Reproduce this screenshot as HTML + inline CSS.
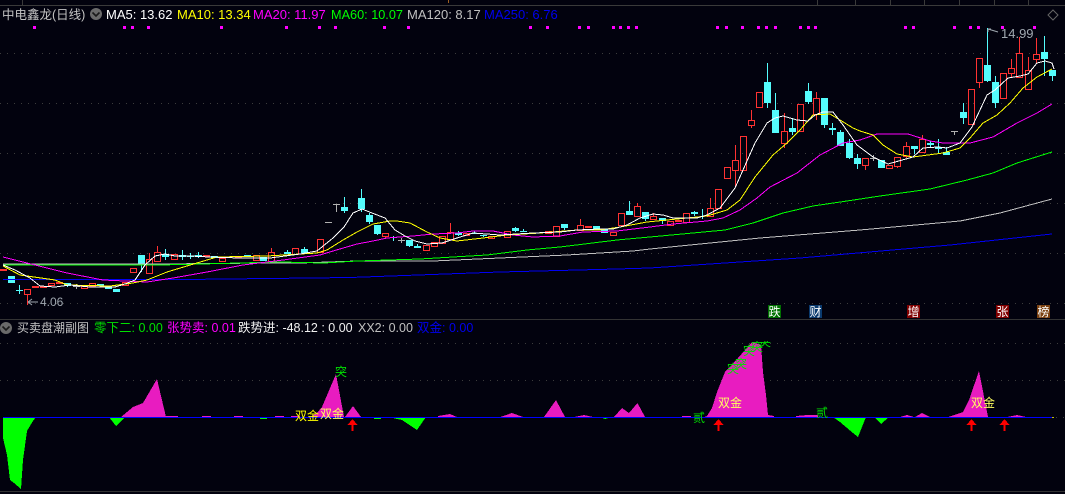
<!DOCTYPE html>
<html lang="zh"><head><meta charset="utf-8"><title>中电鑫龙</title>
<style>
html,body{margin:0;padding:0;background:#02020e;width:1065px;height:494px;overflow:hidden}
svg{display:block}
text{font-family:"Liberation Sans","Noto Sans CJK SC",sans-serif;font-size:13px}
.c{font-size:12px}
.l{font-size:12px;fill:#fff;font-family:"Liberation Sans","WenQuanYi Zen Hei","Noto Sans CJK SC",sans-serif}
.g{font-size:12px;fill:#00e000;font-family:"Liberation Sans","WenQuanYi Zen Hei","Noto Sans CJK SC",sans-serif}
</style></head><body>
<svg width="1065" height="494" viewBox="0 0 1065 494" xmlns="http://www.w3.org/2000/svg">
<defs><clipPath id="tp"><rect x="700" y="341" width="100" height="60"/></clipPath></defs>
<rect width="1065" height="494" fill="#02020e"/>
<!-- top ruler -->
<g shape-rendering="crispEdges" stroke="#3a3a3a" fill="none">
<path d="M0 5.5H1065M22.5 0V5M817.5 0V5M855.5 0V5M890.5 0V5M924.5 0V5M959.5 0V5M994.5 0V5M1028.5 0V5"/>
<path d="M448.5 0V3" stroke="#a06020"/>
<path d="M0 319.5H1065M0 491.5H1065" stroke="#333"/>
</g>
<!-- dotted grid -->
<g shape-rendering="crispEdges" stroke="#3c3c3c" stroke-dasharray="1 6" fill="none">
<path d="M0 53.5H1065M0 103.5H1065M0 153.5H1065M0 203.5H1065M0 253.5H1065M0 303.5H1065M0 343.5H1065M0 380.5H1065"/>
</g>
<path d="M1053 10l5 5-5 5-5-5z" fill="none" stroke="#666"/>
<!-- header -->
<text x="2" y="19" style="font-size:12.5px" fill="#c4c4c4">中电鑫龙(日线)</text>
<circle cx="96" cy="14" r="6" fill="#6a6a6a"/><path d="M92.5 12.5l3.5 3.5 3.5-3.5" fill="none" stroke="#1a1a1a" stroke-width="1.6"/>
<text x="106" y="19" fill="#fff">MA5: 13.62</text>
<text x="177" y="19" fill="#ffff00">MA10: 13.34</text>
<text x="253" y="19" fill="#ff00ff">MA20: 11.97</text>
<text x="331" y="19" fill="#00ff00" style="font-size:12.7px">MA60: 10.07</text>
<text x="407" y="19" fill="#c0c0c0">MA120: 8.17</text>
<text x="484" y="19" fill="#0000f0">MA250: 6.76</text>
<!-- magenta dots -->
<path shape-rendering="crispEdges" fill="#ff00ff" d="M33 26h3v3h-3zM123 26h3v3h-3zM131 26h3v3h-3zM147 26h3v3h-3zM220 26h3v3h-3zM285 26h3v3h-3zM318 26h3v3h-3zM334 26h3v3h-3zM383 26h3v3h-3zM407 26h3v3h-3zM529 26h3v3h-3zM546 26h3v3h-3zM578 26h3v3h-3zM587 26h3v3h-3zM612 26h3v3h-3zM619 26h3v3h-3zM627 26h3v3h-3zM635 26h3v3h-3zM716 26h3v3h-3zM725 26h3v3h-3zM741 26h3v3h-3zM757 26h3v3h-3zM765 26h3v3h-3zM774 26h3v3h-3zM799 26h3v3h-3zM807 26h3v3h-3zM814 26h3v3h-3zM904 26h3v3h-3zM912 26h3v3h-3zM953 26h3v3h-3zM969 26h3v3h-3zM977 26h3v3h-3zM1001 26h3v3h-3zM1033 26h3v3h-3z"/>
<!-- cyan candles -->
<g shape-rendering="crispEdges">
<path fill="#54fcfc" d="M8 276h7v7h-7zM16 290h7v1h-7zM64 283h7v3h-7zM97 284h7v2h-7zM105 287h7v2h-7zM113 289h7v3h-7zM138 255h7v9h-7zM162 254h7v3h-7zM179 255h7v2h-7zM187 256h7v1h-7zM195 255h7v2h-7zM211 256h7v2h-7zM244 255h7v2h-7zM260 257h7v4h-7zM284 252h7v2h-7zM301 249h7v4h-7zM341 207h7v4h-7zM358 198h7v11h-7zM366 215h7v7h-7zM374 225h7v9h-7zM390 237h7v1h-7zM406 240h7v6h-7zM414 246h7v2h-7zM455 233h7v2h-7zM471 233h7v1h-7zM480 235h7v1h-7zM512 228h7v3h-7zM520 231h7v1h-7zM561 224h7v4h-7zM593 226h7v3h-7zM601 229h7v4h-7zM626 211h7v4h-7zM642 212h7v7h-7zM659 218h7v3h-7zM691 212h7v2h-7zM764 82h7v21h-7zM772 110h7v23h-7zM789 128h7v4h-7zM805 91h7v11h-7zM821 98h7v27h-7zM829 128h7v2h-7zM837 132h7v14h-7zM846 143h7v15h-7zM854 158h7v6h-7zM878 160h7v8h-7zM911 146h7v3h-7zM927 143h7v2h-7zM935 147h7v2h-7zM943 152h7v3h-7zM960 112h7v6h-7zM984 65h7v16h-7zM992 82h7v21h-7zM1041 52h7v7h-7zM1049 70h7v6h-7z"/>
<path stroke="#54fcfc" fill="none" d="M19.5 285V294M67.5 286V287M141.5 264V272M165.5 249V260M182.5 250V260M190.5 253V259M198.5 252V258M287.5 250V254M304.5 247V249M344.5 197V213M361.5 189V212M369.5 213V224M377.5 234V235M393.5 236V241M409.5 246V247M417.5 244V246M458.5 231V236M474.5 231V234M483.5 236V237M515.5 227V232M523.5 229V231M564.5 228V230M629.5 201V211M645.5 219V221M662.5 221V224M694.5 211V216M702.5 209V219M767.5 63V108M775.5 93V110M792.5 118V135M808.5 83V104M824.5 125V128M832.5 123V135M840.5 130V132M849.5 139V159M857.5 154V169M914.5 149V154M930.5 141V148M938.5 139V153M946.5 147V152M963.5 103V124M987.5 28V82M995.5 76V108M1044.5 36V76M1052.5 76V81"/>
<!-- red candles -->
<path fill="#ff3232" d="M0 269h7v2h-7z"/>
<path stroke="#ff3232" fill="none" d="M24.5 289.5h6v5h-6zM27.5 295V305M32.5 286.5h6v1h-6zM40.5 286.5h6v1h-6zM48.5 283.5h6v2h-6zM56.5 282.5h6v1h-6zM81.5 286.5h6v2h-6zM89.5 283.5h6v3h-6zM122.5 282.5h6v3h-6zM130.5 268.5h6v4h-6zM146.5 259.5h6v14h-6zM149.5 253V259M154.5 252.5h6v9h-6zM157.5 246V252M171.5 254.5h6v5h-6zM203.5 255.5h6v1h-6zM219.5 258.5h6v3h-6zM235.5 256.5h6v1h-6zM253.5 255.5h6v5h-6zM268.5 252.5h6v9h-6zM271.5 248V252M292.5 248.5h6v6h-6zM317.5 239.5h6v13h-6zM382.5 233.5h6v3h-6zM385.5 237V238M423.5 245.5h6v5h-6zM431.5 242.5h6v4h-6zM439.5 236.5h6v7h-6zM447.5 232.5h6v7h-6zM450.5 223V232M463.5 233.5h6v2h-6zM488.5 236.5h6v2h-6zM504.5 231.5h6v6h-6zM545.5 231.5h6v2h-6zM553.5 226.5h6v10h-6zM577.5 225.5h6v5h-6zM580.5 219V225M585.5 226.5h6v1h-6zM610.5 232.5h6v3h-6zM618.5 213.5h6v12h-6zM634.5 206.5h6v10h-6zM637.5 203V206M650.5 216.5h6v3h-6zM653.5 213V216M667.5 221.5h6v4h-6zM675.5 220.5h6v1h-6zM683.5 213.5h6v9h-6zM707.5 208.5h6v8h-6zM710.5 198V208M715.5 189.5h6v19h-6zM724.5 167.5h6v11h-6zM732.5 160.5h6v10h-6zM735.5 145V160M735.5 171V187M740.5 136.5h6v34h-6zM748.5 120.5h6v5h-6zM751.5 110V120M751.5 126V128M756.5 92.5h6v15h-6zM781.5 131.5h6v12h-6zM784.5 113V131M784.5 144V148M797.5 104.5h6v27h-6zM813.5 98.5h6v16h-6zM816.5 92V98M816.5 115V120M862.5 158.5h6v7h-6zM865.5 166V170M886.5 165.5h6v3h-6zM894.5 157.5h6v9h-6zM897.5 167V168M903.5 146.5h6v10h-6zM906.5 142V146M906.5 157V158M919.5 139.5h6v13h-6zM922.5 135V139M968.5 89.5h6v35h-6zM976.5 58.5h6v24h-6zM979.5 83V88M1000.5 73.5h6v25h-6zM1008.5 68.5h6v5h-6zM1011.5 59V68M1011.5 74V77M1016.5 53.5h6v24h-6zM1019.5 37V53M1025.5 70.5h6v19h-6zM1028.5 57V70M1033.5 54.5h6v5h-6zM1036.5 38V54M1036.5 60V63"/>
<!-- grey doji -->
<path stroke="#b0b0b0" fill="none" d="M73 286.5h7M76.5 284V289M333 204.5h7M336.5 204V212M325 222.5h7M398 240.5h7M401.5 238V243M870 158.5h7M873.5 155V161M951 131.5h7M954.5 131V135"/>
</g>
<!-- MA lines -->
<g fill="none" stroke-width="1" shape-rendering="crispEdges">
<polyline stroke="#0000f0" points="3,279.5 185,279.5 310,278 350,277.5 500,272 617,269 650,268 800,258 950,245 1052,234"/>
<polyline stroke="#c0c0c0" points="3,264 160,264 267,263 300,263 357,261 433,261 500,258 567,255 633,251 650,249 760,238 860,230 960,221 1000,213 1052,199"/>
<polyline stroke="#00ff00" points="3,265 160,265 280,262 324,263 357,261 420,259 453,257 487,255 527,250 560,247 617,240 650,237 725,230 753,223 783,213 813,206 847,201 880,196 930,189 967,180 993,173 1017,163 1052,152"/>
<polyline stroke="#ff00ff" points="3,257 27,263 67,273 103,280 147,282 173,278 207,272 243,265 283,260 320,255 333,251 357,244 373,241 387,238 413,236 433,234 457,233 473,231 493,231 513,235 533,237 560,236 583,232 617,231 650,227 673,224 707,221 723,218 740,210 757,198 770,187 797,173 820,155 843,143 860,140 877,134 908,134 930,141 943,143 970,143 993,137 1017,123 1037,113 1052,104"/>
<polyline stroke="#ffff00" points="3,266 20,275 55,280 67,285 110,286 133,283 147,280 167,272 197,263 217,257 267,256 317,253 327,250 343,240 357,232 373,224 390,221 397,221 410,223 427,232 440,238 457,241 483,238 507,235 540,233 577,230 600,230 620,227 647,222 667,220 707,216 727,210 740,200 755,177 773,155 787,143 800,130 813,115 830,114 840,120 853,128 860,131 873,135 883,145 897,154 913,157 943,153 960,148 970,138 983,123 997,115 1010,103 1023,88 1037,77 1052,69"/>
<polyline stroke="#ffffff" points="3,265 15,270 30,278 40,286 55,287 70,285 90,287 115,287 125,284 135,280 145,265 155,256 165,254 175,256 190,256 210,257 240,258 270,258 300,254 317,251 333,238 344,227 353,213 362,209 372,213 385,218 395,230 405,236 415,241 427,244 442,243 457,238 473,233 500,235 533,233 560,232 577,230 600,229 613,229 627,225 640,218 653,214 663,215 673,218 697,218 707,215 720,208 735,188 743,170 755,143 767,123 775,118 783,116 797,120 808,121 815,115 823,112 833,112 843,125 857,145 873,157 888,164 913,157 923,148 938,147 947,148 960,143 972,127 987,95 995,90 1008,78 1020,76 1028,74 1037,63 1045,61 1052,63 1054,69"/>
</g>
<!-- price annotations -->
<path d="M28 302H38M28 302l4-3M28 302l4 3" stroke="#a0a8b0" fill="none"/>
<text x="40" y="306" style="font-size:12px" fill="#a0a8b0">4.06</text>
<path d="M988 29l10 3M988 29v3M988 29h3" stroke="#a0a8b0" fill="none"/>
<text x="1001" y="38" style="font-size:13px" fill="#a0a8b0">14.99</text>
<!-- event labels -->
<g shape-rendering="crispEdges">
<rect x="768" y="305" width="13" height="13" fill="#007000"/>
<rect x="809" y="305" width="13" height="13" fill="#0a3a6e"/>
<rect x="907" y="305" width="13" height="13" fill="#800000"/>
<rect x="996" y="305" width="13" height="13" fill="#800000"/>
<rect x="1037" y="305" width="13" height="13" fill="#7a4010"/>
</g>
<text class="l" x="768.5" y="316">跌</text>
<text class="l" x="809.5" y="316">财</text>
<text class="l" x="907.5" y="316">增</text>
<text class="l" x="996.5" y="316">张</text>
<text class="l" x="1037.5" y="316">榜</text>
<!-- sub panel header -->
<circle cx="6" cy="328" r="6" fill="#6a6a6a"/><path d="M2.5 326.5l3.5 3.5 3.5-3.5" fill="none" stroke="#1a1a1a" stroke-width="1.6"/>
<text class="c" x="17" y="332" fill="#c4c4c4">买卖盘潮副图</text>
<text class="c" x="94" y="332" fill="#00e000" style="font-size:12.5px">零下二: 0.00</text>
<text class="c" x="167" y="332" fill="#ff00ff" style="font-size:12.5px">张势卖: 0.01</text>
<text class="c" x="238" y="332" fill="#f0f0f0" style="font-size:12.5px">跌势进: -48.12 : 0.00</text>
<text class="c" x="358" y="332" fill="#c0c0c0" style="font-size:12.5px">XX2: 0.00</text>
<text class="c" x="417" y="332" fill="#0000f0" style="font-size:12.5px">双金: 0.00</text>
<!-- histogram magenta -->
<path shape-rendering="crispEdges" fill="#e81cc0" d="M121 417L133 407 143 403 157 379 166 417zM166 416h12v1h-12zM202 416h9v1h-9zM234 416h9v1h-9zM275 416h9v1h-9zM291 416h9v1h-9zM310 417L317 413 322 407 336 374 344 417zM345 417L353 406 361 417zM438 417V416L450 414 457 417zM500 417L512 413 523 417zM544 417L556 400 565 417zM574 417L584 415 593 417zM614 417L622 408 629 413 637.5 403 645 417zM682 416h9v1h-9zM704 417L707 416 712 408 717 392 725 372 738 358 752 342 761 345 763 372 766 395 768 415 774 416V417zM796 417V416L807 415 818 415V417zM900 417L907 415 914 417zM915 417L922 413 930 417zM948 417L963 412 969 400 979 371 988 417zM1007 417L1017 415 1026 417z"/>
<!-- histogram green -->
<path shape-rendering="crispEdges" fill="#00ff00" d="M3 417L3 438 7 455 10 480 14 483 21 489 23 460 27 431 33 421 36 417zM109 417L116 426 125 417zM260 417h7v2h-7zM374 417h7v2h-7zM388 417L402 420 417 430 426 417zM599 417L605 419 611 417zM833 417L840 422 853 433 858 437 866 417zM874 417L881 424 889 417z"/>
<path shape-rendering="crispEdges" d="M3 417.5H1052" stroke="#0000ff" fill="none"/>
<path shape-rendering="crispEdges" d="M1052 417.5h2" stroke="#c0c000" fill="none"/>
<path shape-rendering="crispEdges" d="M1056 417.5H1065" stroke="#3c3c3c" stroke-dasharray="1 6" fill="none"/>
<!-- signal texts -->
<text class="g" x="335" y="376">突</text>
<g clip-path="url(#tp)">
<text class="g" x="727" y="373">突</text>
<text class="g" x="735" y="368">突</text>
<text class="g" x="743" y="355">突</text>
<text class="g" x="751" y="351">突</text>
<text class="g" x="759" y="346">突</text>
</g>
<text class="g" x="693" y="422">贰</text>
<text class="g" x="816" y="417">贰</text>
<text class="c" x="295" y="420" fill="#ffff00">双金</text>
<text class="c" x="320" y="418" fill="#ffff60">双金</text>
<text class="c" x="718" y="407" fill="#ffff60">双金</text>
<text class="c" x="971" y="407" fill="#ffff60">双金</text>
<!-- red arrows -->
<path shape-rendering="crispEdges" fill="#ff0000" d="M352.5 419l5 6h-4v6h-2v-6h-4zM718.5 419l5 6h-4v6h-2v-6h-4zM971.5 419l5 6h-4v6h-2v-6h-4zM1004.5 419l5 6h-4v6h-2v-6h-4z"/>
</svg>
</body></html>
